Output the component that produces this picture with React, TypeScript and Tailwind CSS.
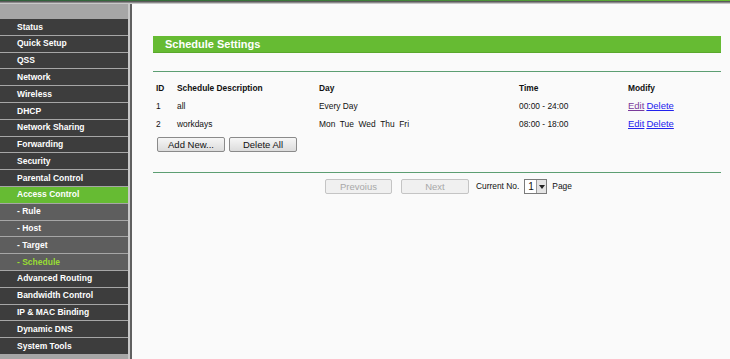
import React from "react";

const items: { label: string; kind: "main" | "active" | "sub" | "subActive" }[] = [
  { label: "Status", kind: "main" },
  { label: "Quick Setup", kind: "main" },
  { label: "QSS", kind: "main" },
  { label: "Network", kind: "main" },
  { label: "Wireless", kind: "main" },
  { label: "DHCP", kind: "main" },
  { label: "Network Sharing", kind: "main" },
  { label: "Forwarding", kind: "main" },
  { label: "Security", kind: "main" },
  { label: "Parental Control", kind: "main" },
  { label: "Access Control", kind: "active" },
  { label: "- Rule", kind: "sub" },
  { label: "- Host", kind: "sub" },
  { label: "- Target", kind: "sub" },
  { label: "- Schedule", kind: "subActive" },
  { label: "Advanced Routing", kind: "main" },
  { label: "Bandwidth Control", kind: "main" },
  { label: "IP & MAC Binding", kind: "main" },
  { label: "Dynamic DNS", kind: "main" },
  { label: "System Tools", kind: "main" },
];

function itemClass(kind: string) {
  switch (kind) {
    case "active":
      return "bg-[#66bb33] text-white";
    case "sub":
      return "bg-[#5e5e5e] text-white";
    case "subActive":
      return "bg-[#5e5e5e] text-[#99dd33]";
    default:
      return "bg-[#3d3d3d] text-white";
  }
}

function Btn({ children, w, disabled }: { children: React.ReactNode; w: string; disabled?: boolean }) {
  return (
    <button
      className={
        "h-[15px] rounded-[2px] border text-[9.5px] leading-[13px] flex items-center justify-center " +
        w +
        (disabled
          ? " border-[#c4c4c4] bg-[#f0f0f0] text-[#a8a8a8]"
          : " border-[#8a8a8a] bg-gradient-to-b from-[#f6f6f6] to-[#dcdcdc] text-[#111]")
      }
    >
      {children}
    </button>
  );
}

export default function App() {
  return (
    <div
      className="w-[730px] h-[359px] overflow-hidden flex flex-col bg-[#fafafa]"
      style={{ fontFamily: '"Liberation Sans", Arial, sans-serif' }}
    >
      <div className="h-px bg-gradient-to-r from-[#2f5f3a] via-[#3f7f3a] to-[#66bb33]" />
      <div className="h-px bg-[#5a5a5a]" />
      <div className="h-px bg-[#8a8a8a]" />
      <div className="h-px bg-[#c8c8c8]" />
      <div className="flex flex-1 min-h-0">
        <div className="w-[132px] flex shrink-0">
          <div className="w-[128px] bg-[#a6a6a6] flex flex-col pt-[15px] gap-px">
            {items.map((it) => (
              <div
                key={it.label}
                className={
                  "h-[15.8px] pl-[17px] flex items-center text-[8.5px] font-bold whitespace-nowrap " +
                  itemClass(it.kind)
                }
              >
                {it.label}
              </div>
            ))}
          </div>
          <div className="w-[2px] bg-[#c8c8c8]" />
          <div className="w-[2px] bg-[#606060]" />
        </div>
        <div className="flex-1 pl-[21px] pr-[9px] pt-[32px] text-[8.4px] text-[#111]">
          <div className="h-[17px] bg-[#66bb33] border-b border-[#5aa82c] pl-[12px] flex items-center text-white font-bold text-[11px]">
            Schedule Settings
          </div>
          <div className="mt-[18px] h-px bg-[#5c9e72]" />
          <div className="pl-[3px] mt-[7px]">
            <div className="grid grid-cols-[21px_142px_200px_109px_1fr] h-[18px] items-center font-bold">
              <div>ID</div>
              <div>Schedule Description</div>
              <div>Day</div>
              <div>Time</div>
              <div>Modify</div>
            </div>
            {[
              ["1", "all", "Every Day", "00:00 - 24:00", true],
              ["2", "workdays", "Mon\u00a0 Tue\u00a0 Wed\u00a0 Thu\u00a0 Fri", "08:00 - 18:00", false],
            ].map((r) => (
              <div
                key={r[0] as string}
                className="grid grid-cols-[21px_142px_200px_109px_1fr] h-[18px] items-center"
              >
                <div>{r[0]}</div>
                <div>{r[1]}</div>
                <div className="whitespace-pre">{r[2]}</div>
                <div>{r[3]}</div>
                <div className="flex gap-[2px] text-[9.5px]">
                  <span className={"underline " + (r[4] ? "text-[#7a3a9a]" : "text-[#2222ee]")}>Edit</span>
                  <span className="underline text-[#2222ee]">Delete</span>
                </div>
              </div>
            ))}
            <div className="flex gap-[4px] mt-[4px] pl-[1px]">
              <Btn w="w-[68px]">Add New...</Btn>
              <Btn w="w-[68px]">Delete All</Btn>
            </div>
          </div>
          <div className="mt-[20px] h-px bg-[#5c9e72]" />
          <div className="flex items-center mt-[6px] pl-[172px]">
            <Btn w="w-[67px]" disabled>
              Prevoius
            </Btn>
            <div className="w-[9px]" />
            <Btn w="w-[68px]" disabled>
              Next
            </Btn>
            <span className="ml-[7px]">Current No.</span>
            <div className="ml-[5px] h-[15px] w-[23px] border border-[#7a7a7a] bg-white flex items-center">
              <span className="pl-[3px] flex-1 text-[10px] leading-none">1</span>
              <div className="h-[13px] w-[10px] bg-[#e4e4e4] border-l border-[#9a9a9a] flex items-center justify-center">
                <svg width="6" height="4" viewBox="0 0 6 4">
                  <path d="M0 0 L6 0 L3 4 Z" fill="#222" />
                </svg>
              </div>
            </div>
            <span className="ml-[5px]">Page</span>
          </div>
        </div>
      </div>
    </div>
  );
}
